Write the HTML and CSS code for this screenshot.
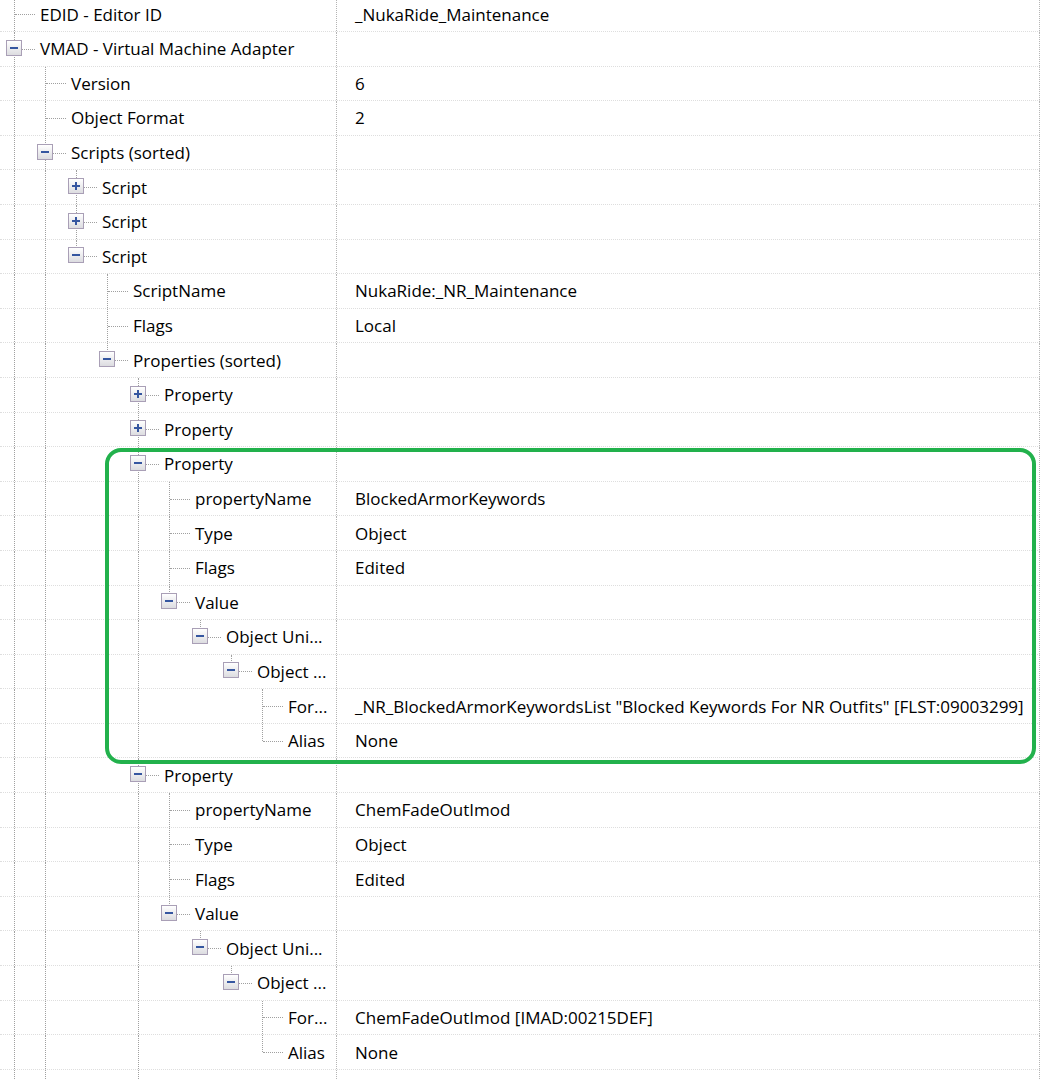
FILE: index.html
```html
<!DOCTYPE html>
<html lang="en">
<head>
  <meta charset="UTF-8" />
  <meta name="viewport" content="width=device-width, initial-scale=1.0" />
  <title>VMAD - NukaRide Maintenance</title>
  <link rel="stylesheet" href="styles.css">
</head>
<body>
  <div class="tree">
    <div class="row"><div class="name"><i class="c"></i><span>EDID - Editor ID</span></div><div class="val">_NukaRide_Maintenance</div></div>
    <div class="row"><div class="name"><i class="c"><b class="box minus"></b></i><span>VMAD - Virtual Machine Adapter</span></div><div class="val"></div></div>
    <div class="row"><div class="name"><i class="g"></i><i class="c"></i><span>Version</span></div><div class="val">6</div></div>
    <div class="row"><div class="name"><i class="g"></i><i class="c"></i><span>Object Format</span></div><div class="val">2</div></div>
    <div class="row"><div class="name"><i class="g"></i><i class="c"><b class="box minus"></b></i><span>Scripts (sorted)</span></div><div class="val"></div></div>
    <div class="row"><div class="name"><i class="g"></i><i class="g"></i><i class="c"><b class="box plus"></b></i><span>Script</span></div><div class="val"></div></div>
    <div class="row"><div class="name"><i class="g"></i><i class="g"></i><i class="c"><b class="box plus"></b></i><span>Script</span></div><div class="val"></div></div>
    <div class="row"><div class="name"><i class="g"></i><i class="g"></i><i class="c end"><b class="box minus"></b></i><span>Script</span></div><div class="val"></div></div>
    <div class="row"><div class="name"><i class="g"></i><i class="g"></i><i class="g e"></i><i class="c"></i><span>ScriptName</span></div><div class="val">NukaRide:_NR_Maintenance</div></div>
    <div class="row"><div class="name"><i class="g"></i><i class="g"></i><i class="g e"></i><i class="c"></i><span>Flags</span></div><div class="val">Local</div></div>
    <div class="row"><div class="name"><i class="g"></i><i class="g"></i><i class="g e"></i><i class="c end"><b class="box minus"></b></i><span>Properties (sorted)</span></div><div class="val"></div></div>
    <div class="row"><div class="name"><i class="g"></i><i class="g"></i><i class="g e"></i><i class="g e"></i><i class="c"><b class="box plus"></b></i><span>Property</span></div><div class="val"></div></div>
    <div class="row"><div class="name"><i class="g"></i><i class="g"></i><i class="g e"></i><i class="g e"></i><i class="c"><b class="box plus"></b></i><span>Property</span></div><div class="val"></div></div>

    <div class="row"><div class="name"><i class="g"></i><i class="g"></i><i class="g e"></i><i class="g e"></i><i class="c"><b class="box minus"></b></i><span>Property</span></div><div class="val"></div></div>
    <div class="row"><div class="name"><i class="g"></i><i class="g"></i><i class="g e"></i><i class="g e"></i><i class="g"></i><i class="c"></i><span>propertyName</span></div><div class="val">BlockedArmorKeywords</div></div>
    <div class="row"><div class="name"><i class="g"></i><i class="g"></i><i class="g e"></i><i class="g e"></i><i class="g"></i><i class="c"></i><span>Type</span></div><div class="val">Object</div></div>
    <div class="row"><div class="name"><i class="g"></i><i class="g"></i><i class="g e"></i><i class="g e"></i><i class="g"></i><i class="c"></i><span>Flags</span></div><div class="val">Edited</div></div>
    <div class="row"><div class="name"><i class="g"></i><i class="g"></i><i class="g e"></i><i class="g e"></i><i class="g"></i><i class="c end"><b class="box minus"></b></i><span>Value</span></div><div class="val"></div></div>
    <div class="row"><div class="name"><i class="g"></i><i class="g"></i><i class="g e"></i><i class="g e"></i><i class="g"></i><i class="g e"></i><i class="c end"><b class="box minus"></b></i><span>Object Uni...</span></div><div class="val"></div></div>
    <div class="row"><div class="name"><i class="g"></i><i class="g"></i><i class="g e"></i><i class="g e"></i><i class="g"></i><i class="g e"></i><i class="g e"></i><i class="c end"><b class="box minus"></b></i><span>Object ...</span></div><div class="val"></div></div>
    <div class="row"><div class="name"><i class="g"></i><i class="g"></i><i class="g e"></i><i class="g e"></i><i class="g"></i><i class="g e"></i><i class="g e"></i><i class="g e"></i><i class="c"></i><span>For...</span></div><div class="val">_NR_BlockedArmorKeywordsList "Blocked Keywords For NR Outfits" [FLST:09003299]</div></div>
    <div class="row"><div class="name"><i class="g"></i><i class="g"></i><i class="g e"></i><i class="g e"></i><i class="g"></i><i class="g e"></i><i class="g e"></i><i class="g e"></i><i class="c end"></i><span>Alias</span></div><div class="val">None</div></div>

    <div class="row"><div class="name"><i class="g"></i><i class="g"></i><i class="g e"></i><i class="g e"></i><i class="c"><b class="box minus"></b></i><span>Property</span></div><div class="val"></div></div>
    <div class="row"><div class="name"><i class="g"></i><i class="g"></i><i class="g e"></i><i class="g e"></i><i class="g"></i><i class="c"></i><span>propertyName</span></div><div class="val">ChemFadeOutImod</div></div>
    <div class="row"><div class="name"><i class="g"></i><i class="g"></i><i class="g e"></i><i class="g e"></i><i class="g"></i><i class="c"></i><span>Type</span></div><div class="val">Object</div></div>
    <div class="row"><div class="name"><i class="g"></i><i class="g"></i><i class="g e"></i><i class="g e"></i><i class="g"></i><i class="c"></i><span>Flags</span></div><div class="val">Edited</div></div>
    <div class="row"><div class="name"><i class="g"></i><i class="g"></i><i class="g e"></i><i class="g e"></i><i class="g"></i><i class="c end"><b class="box minus"></b></i><span>Value</span></div><div class="val"></div></div>
    <div class="row"><div class="name"><i class="g"></i><i class="g"></i><i class="g e"></i><i class="g e"></i><i class="g"></i><i class="g e"></i><i class="c end"><b class="box minus"></b></i><span>Object Uni...</span></div><div class="val"></div></div>
    <div class="row"><div class="name"><i class="g"></i><i class="g"></i><i class="g e"></i><i class="g e"></i><i class="g"></i><i class="g e"></i><i class="g e"></i><i class="c end"><b class="box minus"></b></i><span>Object ...</span></div><div class="val"></div></div>
    <div class="row"><div class="name"><i class="g"></i><i class="g"></i><i class="g e"></i><i class="g e"></i><i class="g"></i><i class="g e"></i><i class="g e"></i><i class="g e"></i><i class="c"></i><span>For...</span></div><div class="val">ChemFadeOutImod [IMAD:00215DEF]</div></div>
    <div class="row"><div class="name"><i class="g"></i><i class="g"></i><i class="g e"></i><i class="g e"></i><i class="g"></i><i class="g e"></i><i class="g e"></i><i class="g e"></i><i class="c end"></i><span>Alias</span></div><div class="val">None</div></div>
    <div class="row"><div class="name"><i class="g"></i><i class="g"></i><i class="g e"></i><i class="g e"></i><i class="g"></i></div><div class="val"></div></div>

    <div class="mark"></div>
  </div>
</body>
</html>
```

FILE: styles.css
```css
body {
  margin: 0;
  background: #fff;
  font-family: "Open Sans", "Noto Sans", sans-serif;
  font-size: 17px;
  color: #000;
  overflow: hidden;
}
.tree {
  position: relative;
  margin-top: -2.6px;
  width: 1040px;
}
.row {
  display: flex;
  height: 34.6px;
  box-sizing: border-box;
  border-bottom: 1px dotted #dedede;
}
.name {
  display: flex;
  align-items: stretch;
  width: 337px;
  flex: none;
  box-sizing: border-box;
  border-right: 1px dotted #b4b4b4;
  white-space: nowrap;
  overflow: hidden;
}
.name span {
  align-self: center;
}
.val {
  flex: 1;
  display: flex;
  align-items: center;
  padding-left: 18px;
  border-right: 1px dotted #b4b4b4;
  white-space: nowrap;
}

/* tree guide lines */
.g, .c {
  position: relative;
  flex: none;
  display: block;
}
.g {
  width: 31px;
}
.c {
  width: 40px;
}
.g::before, .c::before {
  content: "";
  position: absolute;
  left: 14px;
  top: 0;
  bottom: 0;
  border-left: 1px dotted #a0a0a0;
}
.g.e::before {
  display: none;
}
.c.end::before {
  bottom: 50%;
}
.c::after {
  content: "";
  position: absolute;
  left: 15px;
  width: 20px;
  top: 50%;
  border-top: 1px dotted #a0a0a0;
}

/* expand / collapse boxes */
.box {
  position: absolute;
  z-index: 1;
  left: 6px;
  top: 50%;
  width: 16px;
  height: 16px;
  margin-top: -9px;
  box-sizing: border-box;
  border: 1px solid #a99fb6;
  background: linear-gradient(#ffffff, #dcdce0);
}
.box::before, .box::after {
  content: "";
  position: absolute;
  background: #3556a0;
}
.box::before {
  left: 3px;
  top: 6px;
  width: 8px;
  height: 2px;
}
.box.plus::after {
  left: 6px;
  top: 3px;
  width: 2px;
  height: 8px;
}

/* green annotation frame */
.mark {
  position: absolute;
  left: 105px;
  top: 450.6px;
  width: 931px;
  height: 316px;
  box-sizing: border-box;
  border: 4px solid #22b14c;
  border-radius: 16px;
}
```
